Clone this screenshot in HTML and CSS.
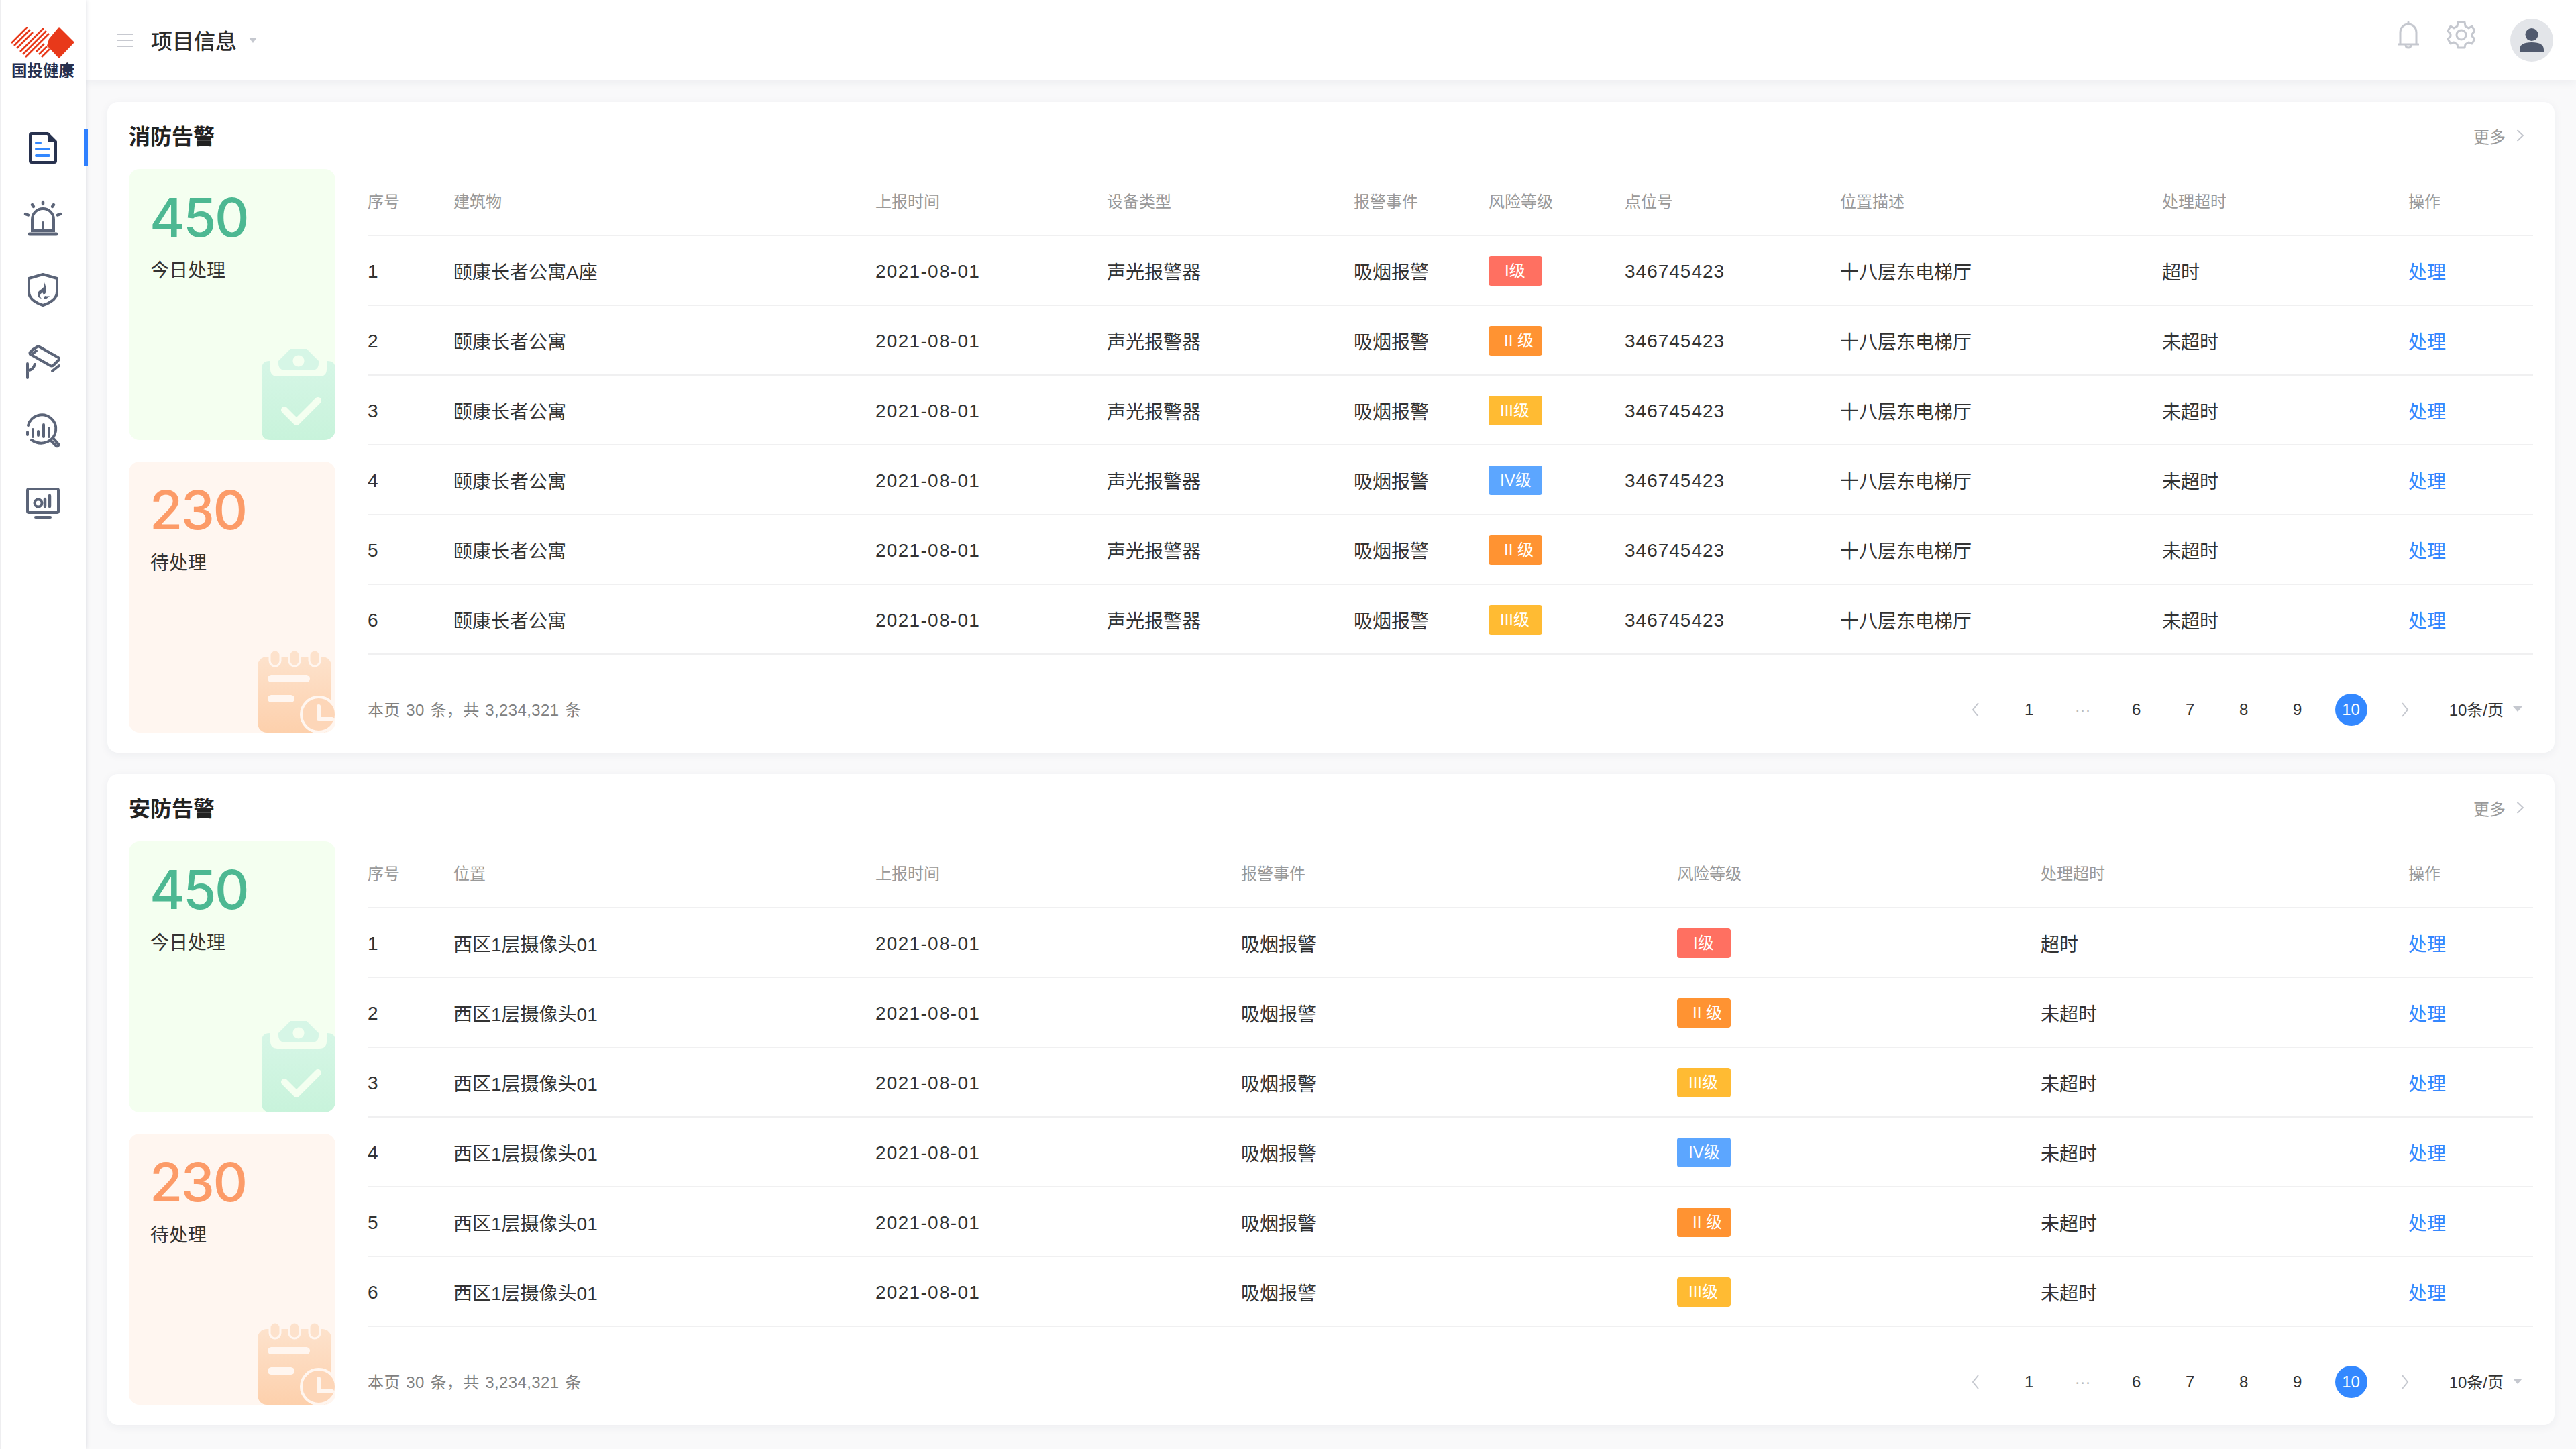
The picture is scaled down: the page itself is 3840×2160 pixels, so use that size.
FILE: index.html
```html
<!DOCTYPE html>
<html lang="zh-CN">
<head>
<meta charset="utf-8">
<title>项目信息</title>
<link rel="stylesheet" href="styles.css">
</head>
<body>
<svg class="defs" width="0" height="0" aria-hidden="true">
  <defs>
    <linearGradient id="gGreen" x1="0" y1="0" x2="0" y2="1"><stop offset="0" stop-color="#d6f6e6"/><stop offset="1" stop-color="#c8f3db"/></linearGradient>
    <linearGradient id="gOrange" x1="0" y1="0" x2="0" y2="1"><stop offset="0" stop-color="#fde2cc"/><stop offset="1" stop-color="#fdd0ac"/></linearGradient>
    <symbol id="clip" viewBox="0 0 110 136">
      <path d="M13 18V30Q13 41 24 41H86Q97 41 97 30V18H98Q110 18 110 30V120Q110 136 94 136H14Q0 136 0 122V30Q0 18 12 18Z" fill="url(#gGreen)"/>
      <path d="M25 18L43 0H67L85 18V21Q85 32 74 32H36Q25 32 25 21Z" fill="#d6f6e6"/>
      <circle cx="55" cy="18" r="8.5" fill="#f4fff0"/>
      <path d="M34 91L52 109L84 77" fill="none" stroke="#f4fff0" stroke-width="10" stroke-linecap="round" stroke-linejoin="round"/>
    </symbol>
    <symbol id="cal" viewBox="0 0 116 122">
      <rect x="0" y="9" width="110" height="113" rx="14" fill="url(#gOrange)"/>
      <g fill="#fde2cc" stroke="#fff6f0" stroke-width="3">
        <rect x="18" y="-1" width="16" height="24" rx="8"/>
        <rect x="47" y="-1" width="16" height="24" rx="8"/>
        <rect x="77" y="-1" width="16" height="24" rx="8"/>
      </g>
      <rect x="15" y="36" width="63" height="11" rx="5.5" fill="#fff6f0"/>
      <rect x="15" y="66" width="40" height="11" rx="5.5" fill="#fff6f0"/>
      <circle cx="91" cy="95" r="26" fill="#fdd6b8" stroke="#fff6f0" stroke-width="4"/>
      <path d="M91 83V102H111" fill="none" stroke="#fff6f0" stroke-width="6" stroke-linecap="round" stroke-linejoin="round"/>
    </symbol>
  </defs>
</svg>

<div class="app">
  <aside class="sidebar">
    <div class="logo">
      <svg class="logo-mark" viewBox="0 0 94 47" width="94" height="47" aria-hidden="true">
        <path d="M0 24L24 0M4 28L28 4M8 32L32 8M13 37L48 2M17 41L52 6M21 45L56 10M37 37L49 25M41 41L53 29M45 45L57 33" stroke="#e8391a" stroke-width="2.6" fill="none"/>
        <path d="M71 0L94 23L71 47L53 28L56 18Z" fill="#e8391a"/>
      </svg>
      <span class="logo-text">国投健康</span>
    </div>
    <nav class="nav">
      <a class="nav-item is-active">
        <svg viewBox="0 0 64 64" width="64" height="64" aria-hidden="true">
          <path d="M15 11H39L51 23V52Q51 54 49 54H15Q13 54 13 52V13Q13 11 15 11Z" fill="none" stroke="#28324f" stroke-width="4" stroke-linejoin="round"/>
          <path d="M39 10L52 23H39Z" fill="#28324f"/>
          <path d="M22 25H28M22 34H41M22 44H41" stroke="#3388ff" stroke-width="4" stroke-linecap="round"/>
        </svg>
      </a>
      <a class="nav-item">
        <svg viewBox="0 0 64 64" width="64" height="64" aria-hidden="true">
          <g fill="none" stroke="#5b6478" stroke-linecap="round">
            <path d="M16 50V33A16 16 0 0 1 48 33V50H16Z" stroke-width="4"/>
            <path d="M32 38V46" stroke-width="4"/>
            <path d="M32 7V10M16 11L18 14M48 11L46 14M6 25L10 26.500M58 25L54 26.500" stroke-width="4.500"/>
            <path d="M12 55H52" stroke-width="5"/>
          </g>
        </svg>
      </a>
      <a class="nav-item">
        <svg viewBox="0 0 64 64" width="64" height="64" aria-hidden="true">
          <path d="M32 9L53 15V35Q53 48 32 55Q11 48 11 35V15Z" fill="none" stroke="#5b6478" stroke-width="4" stroke-linejoin="round"/>
          <path d="M34 21Q35 28 30 31Q24 34 24 39Q24 44 30 45Q25 40 31 36Q33 38 33 40Q40 35 34 21ZM33 46Q38 46 42 41Q38 42 35 41Q33 43 33 46Z" fill="#5b6478"/>
        </svg>
      </a>
      <a class="nav-item">
        <svg viewBox="0 0 64 64" width="64" height="64" aria-hidden="true">
          <g fill="none" stroke="#5b6478" stroke-width="4" stroke-linecap="round" stroke-linejoin="round">
            <path d="M17 15L25 10L55 27Q57 29 55 31L47 39Q45 40 43 39L13 22Q12 20 13 19Z"/>
            <path d="M16 22L22 17"/>
            <path d="M9 36V57M9 46Q17 46 20 37M46 47L56 39"/>
          </g>
        </svg>
      </a>
      <a class="nav-item">
        <svg viewBox="0 0 64 64" width="64" height="64" aria-hidden="true">
          <g fill="none" stroke="#5b6478" stroke-linecap="round" stroke-linejoin="round">
            <path d="M10 22A21 21 0 1 1 39 46.500Q27 52 15 44" stroke-width="4"/>
            <path d="M9 32V36M17 28V39M25 31V37M33 21V39M41 26V39" stroke-width="4"/>
            <path d="M44 45L52 53Q54 54 55 52Q56 51 55 50L48 42" stroke-width="4"/>
          </g>
        </svg>
      </a>
      <a class="nav-item">
        <svg viewBox="0 0 64 64" width="64" height="64" aria-hidden="true">
          <g fill="none" stroke="#5b6478" stroke-linecap="round" stroke-linejoin="round">
            <rect x="9" y="11" width="46" height="35" rx="2" stroke-width="4"/>
            <circle cx="25" cy="32" r="5.500" stroke-width="4"/>
            <path d="M35 26V37M42 21V37" stroke-width="4.500"/>
            <path d="M21 53H43" stroke-width="4"/>
          </g>
        </svg>
      </a>
    </nav>
  </aside>

  <div class="content">
    <header class="topbar">
      <div class="topbar-left">
        <svg class="hamburger" viewBox="0 0 24 22" width="24" height="22" aria-hidden="true"><path d="M0 2H24M0 11H24M0 20H24" stroke="#c7c9d0" stroke-width="2"/></svg>
        <span class="page-title">项目信息</span>
        <i class="caret caret-lg"></i>
      </div>
      <div class="topbar-right">
        <svg class="bell" viewBox="0 0 32 42" width="32" height="42" aria-hidden="true">
          <g fill="none" stroke="#c5c8cf" stroke-width="3" stroke-linecap="round" stroke-linejoin="round">
            <path d="M4 34V17A12 12 0 0 1 28 17V34"/>
            <path d="M1 35H31"/>
            <path d="M12 36Q12 40 16 40Q20 40 20 36"/>
            <path d="M16 2V5"/>
          </g>
        </svg>
        <svg class="gear" viewBox="0 0 42 42" width="42" height="42" aria-hidden="true">
          <g fill="none" stroke="#c5c8cf" stroke-width="3" stroke-linejoin="round">
            <path d="M16 2H26L27 8L32 11L37 8L41 15L37 20V23L41 27L37 34L32 32L27 35L26 40H16L15 35L10 32L5 34L1 27L5 23V20L1 15L5 8L10 11L15 8Z"/>
            <circle cx="21" cy="21" r="7"/>
          </g>
        </svg>
        <span class="avatar">
          <svg viewBox="0 0 64 64" width="64" height="64" aria-hidden="true">
            <circle cx="32" cy="23.500" r="9.500" fill="#515a6e"/>
            <path d="M14 50V46Q14 35 32 35Q50 35 50 46V50Z" fill="#515a6e"/>
          </svg>
        </span>
      </div>
    </header>

    <main class="main">
      <section class="card">
        <div class="card-head">
          <h2 class="card-title">消防告警</h2>
          <a class="more">更多<svg viewBox="0 0 12 20" width="12" height="20" aria-hidden="true"><path d="M1.500 2L10 10L1.500 18" fill="none" stroke="#c5c8cf" stroke-width="2"/></svg></a>
        </div>
        <div class="card-body">
          <div class="stats">
            <div class="stat stat-green">
              <div class="stat-num">450</div>
              <div class="stat-label">今日处理</div>
              <svg class="stat-clip" aria-hidden="true"><use href="#clip"/></svg>
            </div>
            <div class="stat stat-orange">
              <div class="stat-num">230</div>
              <div class="stat-label">待处理</div>
              <svg class="stat-cal" aria-hidden="true"><use href="#cal"/></svg>
            </div>
          </div>
          <div class="panel">
            <div class="tbl tbl-fire">
              <div class="row row-head"><span>序号</span><span>建筑物</span><span>上报时间</span><span>设备类型</span><span>报警事件</span><span>风险等级</span><span>点位号</span><span>位置描述</span><span>处理超时</span><span>操作</span></div>
              <div class="row"><span class="n">1</span><span>颐康长者公寓A座</span><span class="date">2021-08-01</span><span>声光报警器</span><span>吸烟报警</span><span><b class="lv lv1">I级</b></span><span class="n">346745423</span><span>十八层东电梯厅</span><span>超时</span><a class="act">处理</a></div>
              <div class="row"><span class="n">2</span><span>颐康长者公寓</span><span class="date">2021-08-01</span><span>声光报警器</span><span>吸烟报警</span><span><b class="lv lv2">II 级</b></span><span class="n">346745423</span><span>十八层东电梯厅</span><span>未超时</span><a class="act">处理</a></div>
              <div class="row"><span class="n">3</span><span>颐康长者公寓</span><span class="date">2021-08-01</span><span>声光报警器</span><span>吸烟报警</span><span><b class="lv lv3">III级</b></span><span class="n">346745423</span><span>十八层东电梯厅</span><span>未超时</span><a class="act">处理</a></div>
              <div class="row"><span class="n">4</span><span>颐康长者公寓</span><span class="date">2021-08-01</span><span>声光报警器</span><span>吸烟报警</span><span><b class="lv lv4">IV级</b></span><span class="n">346745423</span><span>十八层东电梯厅</span><span>未超时</span><a class="act">处理</a></div>
              <div class="row"><span class="n">5</span><span>颐康长者公寓</span><span class="date">2021-08-01</span><span>声光报警器</span><span>吸烟报警</span><span><b class="lv lv2">II 级</b></span><span class="n">346745423</span><span>十八层东电梯厅</span><span>未超时</span><a class="act">处理</a></div>
              <div class="row"><span class="n">6</span><span>颐康长者公寓</span><span class="date">2021-08-01</span><span>声光报警器</span><span>吸烟报警</span><span><b class="lv lv3">III级</b></span><span class="n">346745423</span><span>十八层东电梯厅</span><span>未超时</span><a class="act">处理</a></div>
            </div>
            <div class="pager">
              <span class="total">本页 30 条，共 3,234,321 条</span>
              <div class="pages">
                <span class="pg"><svg viewBox="0 0 12 24" width="12" height="24" aria-hidden="true"><path d="M10 2L2 12L10 22" fill="none" stroke="#c5c8cf" stroke-width="2"/></svg></span>
                <span class="pg">1</span><span class="pg pg-dots">···</span><span class="pg">6</span><span class="pg">7</span><span class="pg">8</span><span class="pg">9</span><span class="pg is-current">10</span>
                <span class="pg"><svg viewBox="0 0 12 24" width="12" height="24" aria-hidden="true"><path d="M2 2L10 12L2 22" fill="none" stroke="#c5c8cf" stroke-width="2"/></svg></span>
                <span class="size">10条/页<i class="caret"></i></span>
              </div>
            </div>
          </div>
        </div>
      </section>

      <section class="card">
        <div class="card-head">
          <h2 class="card-title">安防告警</h2>
          <a class="more">更多<svg viewBox="0 0 12 20" width="12" height="20" aria-hidden="true"><path d="M1.500 2L10 10L1.500 18" fill="none" stroke="#c5c8cf" stroke-width="2"/></svg></a>
        </div>
        <div class="card-body">
          <div class="stats">
            <div class="stat stat-green">
              <div class="stat-num">450</div>
              <div class="stat-label">今日处理</div>
              <svg class="stat-clip" aria-hidden="true"><use href="#clip"/></svg>
            </div>
            <div class="stat stat-orange">
              <div class="stat-num">230</div>
              <div class="stat-label">待处理</div>
              <svg class="stat-cal" aria-hidden="true"><use href="#cal"/></svg>
            </div>
          </div>
          <div class="panel">
            <div class="tbl tbl-sec">
              <div class="row row-head"><span>序号</span><span>位置</span><span>上报时间</span><span>报警事件</span><span>风险等级</span><span>处理超时</span><span>操作</span></div>
              <div class="row"><span class="n">1</span><span>西区1层摄像头01</span><span class="date">2021-08-01</span><span>吸烟报警</span><span><b class="lv lv1">I级</b></span><span>超时</span><a class="act">处理</a></div>
              <div class="row"><span class="n">2</span><span>西区1层摄像头01</span><span class="date">2021-08-01</span><span>吸烟报警</span><span><b class="lv lv2">II 级</b></span><span>未超时</span><a class="act">处理</a></div>
              <div class="row"><span class="n">3</span><span>西区1层摄像头01</span><span class="date">2021-08-01</span><span>吸烟报警</span><span><b class="lv lv3">III级</b></span><span>未超时</span><a class="act">处理</a></div>
              <div class="row"><span class="n">4</span><span>西区1层摄像头01</span><span class="date">2021-08-01</span><span>吸烟报警</span><span><b class="lv lv4">IV级</b></span><span>未超时</span><a class="act">处理</a></div>
              <div class="row"><span class="n">5</span><span>西区1层摄像头01</span><span class="date">2021-08-01</span><span>吸烟报警</span><span><b class="lv lv2">II 级</b></span><span>未超时</span><a class="act">处理</a></div>
              <div class="row"><span class="n">6</span><span>西区1层摄像头01</span><span class="date">2021-08-01</span><span>吸烟报警</span><span><b class="lv lv3">III级</b></span><span>未超时</span><a class="act">处理</a></div>
            </div>
            <div class="pager">
              <span class="total">本页 30 条，共 3,234,321 条</span>
              <div class="pages">
                <span class="pg"><svg viewBox="0 0 12 24" width="12" height="24" aria-hidden="true"><path d="M10 2L2 12L10 22" fill="none" stroke="#c5c8cf" stroke-width="2"/></svg></span>
                <span class="pg">1</span><span class="pg pg-dots">···</span><span class="pg">6</span><span class="pg">7</span><span class="pg">8</span><span class="pg">9</span><span class="pg is-current">10</span>
                <span class="pg"><svg viewBox="0 0 12 24" width="12" height="24" aria-hidden="true"><path d="M2 2L10 12L2 22" fill="none" stroke="#c5c8cf" stroke-width="2"/></svg></span>
                <span class="size">10条/页<i class="caret"></i></span>
              </div>
            </div>
          </div>
        </div>
      </section>
    </main>
  </div>
</div>
</body>
</html>
```
FILE: styles.css
```css
* { box-sizing: border-box; }
html, body { margin: 0; height: 100%; }
body {
  background: #f9f9fa;
  color: #333;
  font-family: "Liberation Sans", "Noto Sans CJK SC", sans-serif;
  font-size: 28px;
  overflow: hidden;
}
.defs { position: absolute; }
.app { display: flex; width: 3840px; height: 2160px; }

/* sidebar */
.sidebar {
  position: relative;
  z-index: 2;
  flex: 0 0 128px;
  background: #fff;
  border-left: 2px solid #eeeef0;
  box-shadow: 1px 0 6px rgba(40, 50, 80, .12);
}
.logo { display: flex; flex-direction: column; align-items: center; padding-top: 40px; margin-left: -2px; }
.logo-mark { display: block; }
.logo-text { margin-top: 7px; font-size: 23.500px; line-height: 24px; font-weight: 700; color: #27304f; white-space: nowrap; }
.nav { display: flex; flex-direction: column; margin-top: 49px; margin-left: -2px; }
.nav-item { position: relative; display: flex; align-items: center; justify-content: center; height: 106px; }
.nav-item svg { display: block; }
.nav-item.is-active::after {
  content: "";
  position: absolute;
  right: -3px;
  top: 25px;
  width: 6px;
  height: 56px;
  background: #2f80ff;
}

/* topbar */
.content { flex: 1; min-width: 0; display: flex; flex-direction: column; }
.topbar {
  flex: 0 0 120px;
  display: flex;
  align-items: center;
  justify-content: space-between;
  padding: 0 34px 0 46px;
  background: #fff;
  box-shadow: 0 3px 12px rgba(40, 50, 80, .06);
}
.topbar-left { display: flex; align-items: center; }
.page-title { margin-left: 27px; margin-top: -2px; font-size: 32px; font-weight: 500; color: #2b2b2b; }
.hamburger { display: block; }
.caret {
  display: inline-block;
  width: 0;
  height: 0;
  border-left: 7px solid transparent;
  border-right: 7px solid transparent;
  border-top: 8px solid #c5c8cf;
}
.caret-lg { margin-left: 18px; border-left-width: 6px; border-right-width: 6px; }
.topbar-right { display: flex; align-items: center; gap: 44px; }
.topbar-right svg { display: block; }
.topbar-right > svg { margin-top: -16px; }
.bell { margin-right: -2px; }
.gear { margin-right: 8px; }
.avatar { display: block; width: 64px; height: 64px; border-radius: 50%; background: #e3e5e9; }

/* cards */
.main { flex: 1; display: flex; flex-direction: column; gap: 32px; padding: 32px 32px 0; }
.card {
  height: 970px;
  padding: 0 32px;
  background: #fff;
  border-radius: 16px;
  box-shadow: 0 3px 14px rgba(40, 50, 80, .06);
}
.card-head { display: flex; align-items: center; justify-content: space-between; height: 100px; padding-top: 4px; }
.card-title { margin: 0; font-size: 32px; font-weight: 700; color: #222; line-height: 1; }
.more { display: flex; align-items: center; gap: 16px; margin-top: -4px; padding-right: 13px; font-size: 24px; color: #999; }
.card-body { display: flex; gap: 48px; }

/* stat tiles */
.stats { flex: 0 0 308px; display: flex; flex-direction: column; gap: 32px; }
.stat { position: relative; height: 404px; padding: 32px 32px 32px 31px; border-radius: 16px; overflow: hidden; }
.stat-green { background: #f4fff0; }
.stat-orange { background: #fff6f0; }
.stat-num { font-family: Inter, "Liberation Sans", sans-serif; font-size: 80px; line-height: 80px; font-weight: 500; letter-spacing: -2.500px; }
.stat-green .stat-num { color: #4db892; }
.stat-orange .stat-num { color: #fc9b68; }
.stat-label { margin: 20px 0 0 1px; font-size: 28px; line-height: 40px; color: #333; }
.stat-clip { position: absolute; right: 0; bottom: 0; width: 110px; height: 136px; }
.stat-cal { position: absolute; right: 0; bottom: 0; width: 116px; height: 122px; overflow: hidden; }

/* tables */
.panel { flex: 1; min-width: 0; }
.row { display: grid; align-items: center; height: 104px; padding-top: 1px; border-bottom: 2px solid #f0f0f1; }
.tbl-fire .row { grid-template-columns: 128px 629px 345px 368px 201px 203px 321px 480px 367px 1fr; }
.tbl-sec .row { grid-template-columns: 128px 629px 545px 650px 542px 548px 1fr; }
.row.row-head { height: 100px; padding: 0 0 6px; font-size: 24px; color: #999; }
.n, .date { padding-top: 3px; letter-spacing: 1px; }
.date { letter-spacing: 1.300px; }
.act { color: #3388ff; }
.lv {
  display: block;
  width: 80px;
  height: 44px;
  margin-top: 1px;
  border-radius: 4px;
  font-size: 24px;
  font-weight: 400;
  line-height: 44px;
  color: #fff;
  white-space: pre;
}
.lv1 { padding-left: 24px; background: #ff7061; }
.lv2 { padding-left: 23px; background: #ff9332; }
.lv3 { padding-left: 17px; background: #ffbb33; }
.lv4 { padding-left: 17px; background: #5ca6ff; }

/* pagination */
.pager { display: flex; align-items: center; justify-content: space-between; margin-top: 58px; padding-right: 16px; }
.total { margin-top: -3px; font-size: 24px; letter-spacing: .4px; word-spacing: 1.500px; color: #808080; }
.pages { display: flex; align-items: center; gap: 32px; font-size: 24px; color: #333; }
.pg { display: flex; align-items: center; justify-content: center; width: 48px; height: 48px; border-radius: 50%; }
.pg-dots { color: #bbb; }
.is-current { background: #3388ff; color: #fff; }
.size { display: flex; align-items: center; gap: 14px; margin-left: 10px; margin-top: -3px; }
```
